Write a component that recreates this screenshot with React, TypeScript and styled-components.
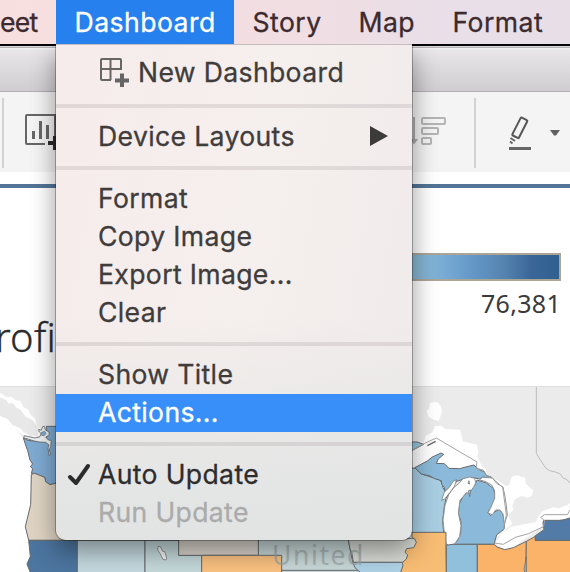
import React from "react";
import styled, { createGlobalStyle } from "styled-components";

const Global = createGlobalStyle`
  * { box-sizing: border-box; }
  body { margin: 0; background: #fff; font-family: Inter, "Liberation Sans", sans-serif; }
`;

const Screen = styled.div`
  position: relative;
  width: 570px;
  height: 572px;
  overflow: hidden;
  display: flex;
  flex-direction: column;
  background: #fff;
`;

const MenuBar = styled.nav`
  display: flex;
  flex: none;
  height: 44px;
  background: linear-gradient(90deg, #f8dfdf 0%, #f1dee2 50%, #e9dfe8 80%, #e8dee7 100%);
`;

const MenuTitle = styled.div<{ $width: number; $active?: boolean; $pad?: number; $track?: number }>`
  flex: none;
  width: ${(p) => p.$width}px;
  padding-left: ${(p) => p.$pad ?? 18.5}px;
  line-height: 44px;
  font-size: 26.6px;
  white-space: nowrap;
  letter-spacing: ${(p) => p.$track ?? 0.45}px;
  -webkit-text-stroke: 0.3px currentColor;
  color: ${(p) => (p.$active ? "#fff" : "#3c2a2e")};
  background: ${(p) => (p.$active ? "#2680ed" : "transparent")};
`;

const TitleBar = styled.div`
  flex: none;
  height: 48px;
  border-top: 2px solid #050408;
  border-bottom: 1px solid #b0afb1;
  background: linear-gradient(#d9d8da 0 1px, #b5b3b6 1px 2px, #f0eff1 2px 3px, #e8e6e9 4px, #cfcdd0 100%);
`;

const Toolbar = styled.div`
  flex: none;
  display: flex;
  align-items: center;
  height: 80px;
  background: #f4f4f4;
`;

const Divider = styled.span<{ $before: number; $after: number }>`
  flex: none;
  width: 2px;
  height: 70px;
  margin: 2px ${(p) => p.$after}px 0 ${(p) => p.$before}px;
  background: #d2d2d2;
`;

const ToolIcon = styled.svg`
  flex: none;
  display: block;
`;

const Rule = styled.div`
  flex: none;
  height: 4px;
  margin-top: 12px;
  background: #537495;
`;

const Legend = styled.section`
  flex: none;
  display: flex;
  flex-direction: column;
  align-items: flex-end;
  height: 131px;
  padding: 65px 9px 0 0;
`;

const ColorRamp = styled.div`
  width: 260px;
  height: 32px;
  border: 2px solid #aca596;
  background: linear-gradient(90deg, #d8d4c9 0, #8bb7cf 42%, #80b3d7 51%, #6ca0ce 61%, #5e90bf 71%, #5482ae 79%, #3a6798 89%, #30608f 100%);
`;

const RampMax = styled.div`
  margin-top: 6px;
  font: 400 25px/32px "Noto Sans", sans-serif;
  letter-spacing: 0.3px;
  color: #3a3a3a;
`;

const SheetTitle = styled.h2`
  flex: none;
  height: 67px;
  margin: 0;
  width: 56px;
  display: flex;
  justify-content: flex-end;
  font: 300 40px/35px "Noto Sans", sans-serif;
  letter-spacing: 0.2px;
  color: #2c2c2c;
  -webkit-text-stroke: 0.3px currentColor;
`;

const MapView = styled.svg`
  flex: none;
  display: block;
`;

const Menu = styled.div`
  position: absolute;
  left: 56px;
  top: 44px;
  width: 356px;
  height: 496px;
  padding-top: 8px;
  border-radius: 0 0 10px 10px;
  background:
    linear-gradient(180deg, rgba(226, 228, 228, 0) 55%, rgba(226, 228, 228, 0.9) 90%, #e2e4e3 100%),
    linear-gradient(100deg, #f6eceb, #f5efed 50%, #f0ebeb);
  box-shadow: inset 0 1px 0 #c6bcbe, 0 0 0 1px rgba(0, 0, 0, 0.28), 0 10px 26px rgba(0, 0, 0, 0.42);
  clip-path: inset(0 -60px -60px -60px);
`;

const Item = styled.div<{ $tone?: "active" | "disabled" | "strong"; $tall?: boolean; $track?: number }>`
  display: grid;
  grid-template-columns: 42px auto 1fr 24px;
  align-items: center;
  height: ${(p) => (p.$tall ? 42 : 38)}px;
  font-size: 26.6px;
  line-height: 36px;
  white-space: nowrap;
  letter-spacing: ${(p) => p.$track ?? 0.35}px;
  -webkit-text-stroke: 0.3px currentColor;
  color: ${(p) =>
    p.$tone === "active" ? "#fff" : p.$tone === "disabled" ? "#ababab" : p.$tone === "strong" ? "#2d2d2d" : "#403c3c"};
  background: ${(p) => (p.$tone === "active" ? "#398ff9" : "transparent")};
`;

const Gutter = styled.span`
  display: flex;
  height: 38px;
  align-items: center;
  padding-left: 11px;
`;

const Label = styled.span`
  display: flex;
  align-items: center;
  padding-bottom: 2px;
`;

const NewIcon = styled.svg`
  flex: none;
  margin: 0 9px 2px 0;
`;

const Arrow = styled.svg`
  grid-column: 4;
  justify-self: end;
  margin: 0 24px 2px 0;
`;

const Separator = styled.div`
  height: 4px;
  margin: 10px 0;
  background: rgba(90, 80, 85, 0.13);
`;

const StateMap = () => (
  <MapView width="570" height="186" viewBox="0 386 570 186">
    <rect x="0" y="386" width="570" height="186" fill="#ebebeb" />
    <path d="M0 386.5H570" stroke="#dedede" />
    {/* Pacific coast and north-western states */}
    <g transform="translate(0 380) scale(.33333)" strokeLinejoin="round">
      <path fill="#fff" d="M0 38L18 51 34 50 48 61 61 63 70 82 85 89 91 103 105 116 111 140 120 145 119 164 106 171 70 166 58 157 47 150 29 143 20 130 0 120Z" />
      <path fill="#e8e8e8" d="M0 52L18 60 26 71 38 69 48 82 63 91 77 110 98 121 111 138 119 151 112 169 90 167 68 154 61 145 38 135 21 116 0 108Z" />
      <path fill="#fff" d="M0 115L20 130 29 143 48 150 60 162 70 174 75 199 83 216 91 242 95 266 95 284 92 371 77 440 91 498 90 530 81 551 91 576H0Z" />
      <g stroke="#67696b" strokeWidth="3">
        <path fill="#7fabd2" d="M70 174L84 181 118 185 139 181 139 139H230V310H165L150 314 137 305 134 292 119 286 104 280 94 280 98 266 91 260 98 252 90 240 83 212Z" />
        <path fill="#dfd4c3" d="M94 283L104 280 119 286 134 292 137 305 150 314 170 309 270 310V481H86L76 440 92 374Z" />
        <path fill="#4c759f" d="M86 481H232V580H92L81 552 91 529Z" />
        <path fill="#c4d9df" d="M232 481H435V580H232Z" />
        <path fill="#c4d8da" d="M435 481H536V526H606V580H435Z" />
        <path fill="#d9d3cb" d="M536 470H776V526H536Z" />
        <path fill="#f4f4f4" strokeWidth="2" d="M475 498L481 500 488 514 494 515 500 534 498 540 489 538 480 520 473 510Z" />
        <path fill="#eef2f3" strokeWidth="2.5" d="M116 148L124 151 128 140 133 139 136 150 147 156 148 165 137 171 145 180 154 181 152 199 148 210 152 224 147 226 144 204 147 195 137 187 119 186 103 183 71 173 73 167 104 174 119 171 124 161 118 156Z" />
        <path fill="#7fabd2" strokeWidth="2" d="M125 157L134 154 138 161 131 168 123 164Z" />
      </g>
    </g>
    {/* Central plains */}
    <g transform="translate(190 380) scale(.33333)" stroke="#67696b" strokeWidth="3" strokeLinejoin="round">
      <path fill="#c8d7d7" d="M205 475H475L480 507 488 546 512 576H205Z" />
      <path fill="#fac181" d="M35 526H275V580H35Z" />
      <path fill="#c8d7d7" d="M275 571H515V590H275Z" />
      <path fill="#d9ddd7" d="M474 475H680V547H490L486 522 480 506Z" />
      <path fill="#b0d3e7" d="M488 547H640V580H514L495 563Z" />
    </g>
    <text x="272" y="564.5" fontFamily="Noto Sans" fontSize="26.500" letterSpacing="1.6" fill="#9aa5a3" opacity=".7">United</text>
    {/* Great Lakes */}
    <g transform="translate(380 380) scale(.33333)" strokeLinejoin="round">
      <path fill="none" stroke="#bcbcbc" strokeWidth="3" d="M469 21V221L482 241 497 264 509 272 526 276 541 282 550 295 560 298 570 310" />
      <g fill="#fff">
        <path d="M150 69L164 66 174 68 182 78 186 96 181 110 176 123 162 119 146 111 140 93 148 84Z" />
        <path d="M90 190L132 187 137 167 157 157 165 138 184 137 196 147 240 149 249 184 268 189 291 194 296 219 292 228 306 260 316 266 324 291 352 300 379 319 389 313 395 290 411 286 435 293 438 312 460 331 455 348 443 353 424 348 404 358 397 378 400 391 384 406 397 431 374 451 350 474 343 490 320 480 250 280 100 270Z" />
        <path d="M475 410L487 394 520 382 535 385 560 376 575 365V419L520 420 493 424 482 444 462 458 424 484 403 503 374 508 346 490 364 462 393 440 434 433 466 427Z" />
      </g>
      <g stroke="#67696b" strokeWidth="3">
        <path fill="#9ac6df" d="M50 186H111L131 193 97 211H50Z" />
        <path fill="#a9cee2" d="M80 263L106 265 125 282 158 293 180 300 187 312 189 323 196 334 207 340 198 355 193 379 188 423 191 459H80Z" />
        <path fill="#8bb9d9" d="M104 263L142 243 157 231 183 219 191 223 175 237 169 250 193 251 207 265 239 266 261 260 282 255 291 264 300 270 313 276 320 287 334 291 332 296 310 291 299 297 280 293 271 294 253 296 231 304 219 314 210 326 197 344 193 322 185 313 184 302 164 296 150 288 124 282Z" />
        <path fill="#8bb9d9" d="M291 300L319 309 341 326 345 349 341 371 324 397 332 407 341 397 358 388 369 401 374 430 372 448 360 457 350 465 342 493H200L230 485 242 460 243 424 235 402 238 372 248 350 264 334 284 316Z" />
        <path fill="#fff" stroke="#8d9092" d="M284 295L269 291 249 296 237 310 221 323 206 344 195 376 189 420 193 459 198 491 207 497 225 491 239 469 243 437 235 399 240 361 259 338 268 340 282 319 287 309Z" />
        <path fill="#fff" strokeWidth="2" d="M185 361L193 337 207 323 220 304 230 299 223 319 210 337 194 357Z" />
        <path fill="#9ac6df" strokeWidth="2" d="M267 302L269 312 264 310ZM265 332L273 330 269 350Z" />
        <path fill="#fff" stroke="#8d9092" d="M298 300L308 292 337 294 350 310 369 321 375 350 379 377 382 405 373 433 369 402 360 390 347 390 337 404 324 399 333 381 344 355 344 332 335 315 315 304Z" />
        <path fill="#f8bd74" d="M90 457H198V490L199 580H61L69 557 67 548 79 537 83 525 75 517 80 506 101 503 109 487 104 477 96 472V457Z" />
        <path fill="#91c0dd" d="M199 496L216 493H292V580H199Z" />
        <path fill="#fab369" d="M292 493H342L351 501 374 509 400 503 439 484V543L435 580H292Z" />
        <path fill="#fab369" d="M439 484L466 469V481H580V580H438V543Z" />
        <path fill="#527ba8" d="M466 467L492 449 489 429 491 421H538L552 419 580 411V481H466Z" />
        <path fill="#ababab" strokeWidth="2" d="M439 530V580H435L432 568Z" />
        <path d="M142 197L167 184" strokeWidth="4" />
      </g>
      <path fill="none" stroke="#a4a4a4" strokeWidth="3" d="M96 211L134 190 169 174 291 246 288 265 310 270 319 285 338 295 368 322 379 405 370 448M344 489L370 493 406 472 446 461 490 440 494 422 482 412 493 404H562L570 390" />
    </g>
  </MapView>
);

export default function App() {
  return (
    <>
      <Global />
      <Screen>
        <MenuBar>
          <MenuTitle $width={56} $pad={-1} $track={-0.7}>eet</MenuTitle>
          <MenuTitle $width={178} $active>Dashboard</MenuTitle>
          <MenuTitle $width={106}>Story</MenuTitle>
          <MenuTitle $width={94}>Map</MenuTitle>
          <MenuTitle $width={130}>Format</MenuTitle>
        </MenuBar>
        <TitleBar />
        <Toolbar>
          <Divider $before={2} $after={21} />
          <ToolIcon width="34" height="40" viewBox="0 0 34 40">
            <path d="M20 32H2Q1 32 1 31V4Q1 3 2 3H30V25" fill="none" stroke="#666" strokeWidth="2" />
            <path d="M8.500 19v8M15.500 9v18M22.500 13v14" stroke="#666" strokeWidth="3" />
            <path d="M23 31h14M30 24v14" stroke="#2c2c2c" strokeWidth="4" />
          </ToolIcon>
          <ToolIcon width="415" height="80" viewBox="59 92 415 80">
            <path d="M414 117v24" stroke="#aaa" strokeWidth="2" />
            <path d="M410 139h8l-4 5.500z" fill="#aaa" />
            <g fill="none" stroke="#b4b4b4" strokeWidth="2">
              <rect x="422" y="118" width="23" height="6" rx="1" />
              <rect x="422" y="128" width="16" height="6" rx="1" />
              <rect x="422" y="138" width="9" height="6" rx="1" />
            </g>
          </ToolIcon>
          <Divider $before={0} $after={33} />
          <ToolIcon width="56" height="40" viewBox="0 0 56 40">
            <rect x="-3.700" y="-10" width="7.400" height="20" rx="1" transform="translate(10.800 15.800) rotate(27)" fill="none" stroke="#555" strokeWidth="2" />
            <path d="M1.500 26l4.500 3M1 29.500l2.500 2" stroke="#666" strokeWidth="2" fill="none" />
            <path d="M0 36.500H22" stroke="#666" strokeWidth="3" />
            <path d="M41 18h10l-4 5.500h-2z" fill="#606060" />
          </ToolIcon>
        </Toolbar>
        <Rule />
        <Legend>
          <ColorRamp />
          <RampMax>76,381</RampMax>
        </Legend>
        <SheetTitle>rofi</SheetTitle>
        <StateMap />
        <Menu>
          <Item $tall>
            <Gutter />
            <Label>
              <NewIcon width="31" height="32" viewBox="0 0 31 32">
                <path d="M13 25H4Q3 25 3 24V5Q3 4 4 4H22Q23 4 23 5V14H3M12.500 4V25" fill="none" stroke="#686565" strokeWidth="2" />
                <path d="M17 25.500H31M24 18.500V32.500" stroke="#656565" strokeWidth="4" />
              </NewIcon>
              New Dashboard
            </Label>
          </Item>
          <Separator />
          <Item>
            <Gutter />
            <Label>Device Layouts</Label>
            <Arrow width="18" height="20" viewBox="0 0 18 20"><path d="M0 0L18 10 0 20Z" fill="#3d3a3a" /></Arrow>
          </Item>
          <Separator />
          <Item><Gutter /><Label>Format</Label></Item>
          <Item><Gutter /><Label>Copy Image</Label></Item>
          <Item><Gutter /><Label>Export Image...</Label></Item>
          <Item><Gutter /><Label>Clear</Label></Item>
          <Separator />
          <Item><Gutter /><Label>Show Title</Label></Item>
          <Item $tone="active"><Gutter /><Label>Actions...</Label></Item>
          <Separator />
          <Item $tone="strong">
            <Gutter>
              <svg width="24" height="24" viewBox="0 0 24 24"><path d="M3 14L9 20 21 3" fill="none" stroke="#2b2b2b" strokeWidth="4" strokeLinecap="round" strokeLinejoin="round" /></svg>
            </Gutter>
            <Label>Auto Update</Label>
          </Item>
          <Item $tone="disabled"><Gutter /><Label>Run Update</Label></Item>
        </Menu>
      </Screen>
    </>
  );
}
